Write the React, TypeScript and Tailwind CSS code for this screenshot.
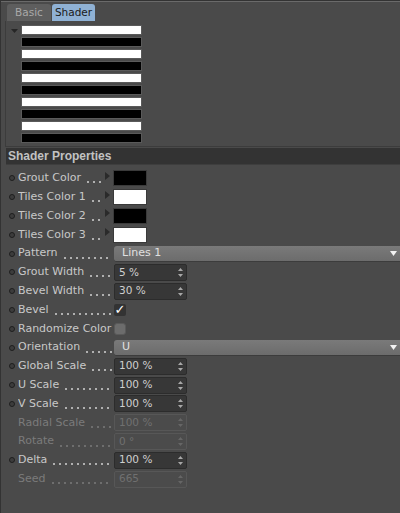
import React from "react";

const FONT = "font-['DejaVu_Sans',sans-serif]";

type Row =
  | { kind: "color"; label: string; color: "black" | "white" }
  | { kind: "select"; label: string; value: string }
  | { kind: "number"; label: string; value: string; disabled?: boolean }
  | { kind: "check"; label: string; checked: boolean };

const rows: Row[] = [
  { kind: "color", label: "Grout Color", color: "black" },
  { kind: "color", label: "Tiles Color 1", color: "white" },
  { kind: "color", label: "Tiles Color 2", color: "black" },
  { kind: "color", label: "Tiles Color 3", color: "white" },
  { kind: "select", label: "Pattern", value: "Lines 1" },
  { kind: "number", label: "Grout Width", value: "5 %" },
  { kind: "number", label: "Bevel Width", value: "30 %" },
  { kind: "check", label: "Bevel", checked: true },
  { kind: "check", label: "Randomize Color", checked: false },
  { kind: "select", label: "Orientation", value: "U" },
  { kind: "number", label: "Global Scale", value: "100 %" },
  { kind: "number", label: "U Scale", value: "100 %" },
  { kind: "number", label: "V Scale", value: "100 %" },
  { kind: "number", label: "Radial Scale", value: "100 %", disabled: true },
  { kind: "number", label: "Rotate", value: "0 °", disabled: true },
  { kind: "number", label: "Delta", value: "100 %" },
  { kind: "number", label: "Seed", value: "665", disabled: true },
];

function Spinner({ dim }: { dim?: boolean }) {
  return (
    <svg width="5" height="9" viewBox="0 0 5 9" className="shrink-0">
      <path d="M2.5 0 L5 3 L0 3 Z" fill={dim ? "#666" : "#a8a8a8"} />
      <path d="M0 6 L5 6 L2.5 9 Z" fill={dim ? "#666" : "#a8a8a8"} />
    </svg>
  );
}

function Label({ text, disabled, width }: { text: string; disabled?: boolean; width: string }) {
  return (
    <div className={`flex items-center ${width} shrink-0 overflow-hidden whitespace-nowrap`}>
      <span className={`shrink-0 ${disabled ? "text-[#7b7b7b]" : "text-[#c8c8c8]"}`}>{text}</span>
      {/* leader dots */}
      <span
        className={`ml-[4px] mr-[2px] mt-[8px] h-[2px] min-w-0 flex-1 bg-size-[6px_2px] bg-repeat-x ${
          disabled
            ? "bg-[radial-gradient(circle,#6e6e6e_0.8px,transparent_1.1px)]"
            : "bg-[radial-gradient(circle,#b0b0b0_0.8px,transparent_1.1px)]"
        }`}
      />
    </div>
  );
}

function PropRow({ row }: { row: Row }) {
  const disabled = row.kind === "number" && row.disabled;
  return (
    <div className="flex h-[18.8px] items-center pl-[8px]">
      <div className="flex w-[9px] shrink-0 items-center">
        {!disabled && (
          <div className="h-[6px] w-[6px] rounded-full border border-[#1e1e1e] bg-[#3c3c3c]" />
        )}
      </div>
      {row.kind === "color" && (
        <>
          <Label text={row.label} width="w-[87px]" />
          <svg width="5" height="8" viewBox="0 0 5 8" className="mb-[5px] mr-[3px] shrink-0">
            <path d="M0 0 L5 4 L0 8 Z" fill="#2a2a2a" />
          </svg>
          <div
            className={`h-[16px] w-[34px] border border-[#3a3a3a] ${
              row.color === "black" ? "bg-black" : "bg-white"
            }`}
          />
        </>
      )}
      {row.kind !== "color" && <Label text={row.label} disabled={disabled} width="w-[96px]" />}
      {row.kind === "select" && (
        <div className="flex h-[16px] flex-1 items-center justify-between rounded-l-[3px] border-b border-[#3c3c3c] bg-gradient-to-b from-[#7a7a7a] to-[#6c6c6c] pl-[8px] pr-[3px]">
          <span className="text-[11px] text-[#e0e0e0]">{row.value}</span>
          <svg width="7" height="5" viewBox="0 0 7 5">
            <path d="M0 0 L7 0 L3.5 5 Z" fill="#f2f2f2" />
          </svg>
        </div>
      )}
      {row.kind === "number" && (
        <div
          className={`flex h-[17px] w-[73px] items-center justify-between rounded-[2px] border pl-[4px] pr-[3px] ${
            disabled ? "border-[#575757] bg-[#4b4b4b]" : "border-[#2c2c2c] bg-[#373737]"
          }`}
        >
          <span className={`text-[10.5px] ${disabled ? "text-[#707070]" : "text-[#cfcfcf]"}`}>
            {row.value}
          </span>
          <Spinner dim={disabled} />
        </div>
      )}
      {row.kind === "check" &&
        (row.checked ? (
          <div className="flex h-[12px] w-[12px] items-center justify-center rounded-[2px] bg-[#333333] text-[13px] leading-none text-white">
            ✓
          </div>
        ) : (
          <div className="h-[12px] w-[12px] rounded-[3px] border border-[#5a5a5a] bg-[#6c6c6c]" />
        ))}
    </div>
  );
}

export default function App() {
  const stripes = Array.from({ length: 10 }, (_, i) => (i % 2 === 0 ? "bg-white" : "bg-black"));

  return (
    <div
      className={`h-[513px] w-[400px] overflow-hidden border-l border-t border-[#333333] bg-[#4a4a4a] text-[11px] ${FONT}`}
    >
      <div className="h-[1px] bg-[#6a6a6a]" />

      {/* tabs */}
      <div className="flex gap-[1px] pl-[6px] pt-[2px]">
        <div className="flex h-[17px] w-[44px] items-center justify-center rounded-t-[3px] bg-[#5e5e5e] text-[10.5px] text-[#a9a9a9]">
          Basic
        </div>
        <div className="flex h-[17px] w-[43px] items-center justify-center rounded-t-[3px] bg-[#8fb1d4] text-[10.5px] text-[#1a1a1a]">
          Shader
        </div>
      </div>

      {/* preview */}
      <div className="ml-[4px] flex h-[126px] border-b border-l border-[#3c3c3c] pt-[4px]">
        <svg width="7" height="4" viewBox="0 0 7 4" className="ml-[5px] mt-[4px] shrink-0">
          <path d="M0 0 L7 0 L3.5 4 Z" fill="#262626" />
        </svg>
        <div className="ml-[3px] flex w-[121px] flex-col gap-[2px]">
          {stripes.map((c, i) => (
            <div key={i} className={`h-[10px] border border-[#5a5a5a] ${c}`} />
          ))}
        </div>
      </div>

      {/* header */}
      <div className="ml-[5px] mt-[1px] flex h-[17px] items-center border-b border-[#3e3e3e] bg-[#333333] pl-[2px] font-['Liberation_Sans',sans-serif] text-[12px] font-bold text-[#c2c2c2]">
        Shader Properties
      </div>

      <div className="pt-[4px]">
        {rows.map((r, i) => (
          <PropRow key={i} row={r} />
        ))}
      </div>
    </div>
  );
}
